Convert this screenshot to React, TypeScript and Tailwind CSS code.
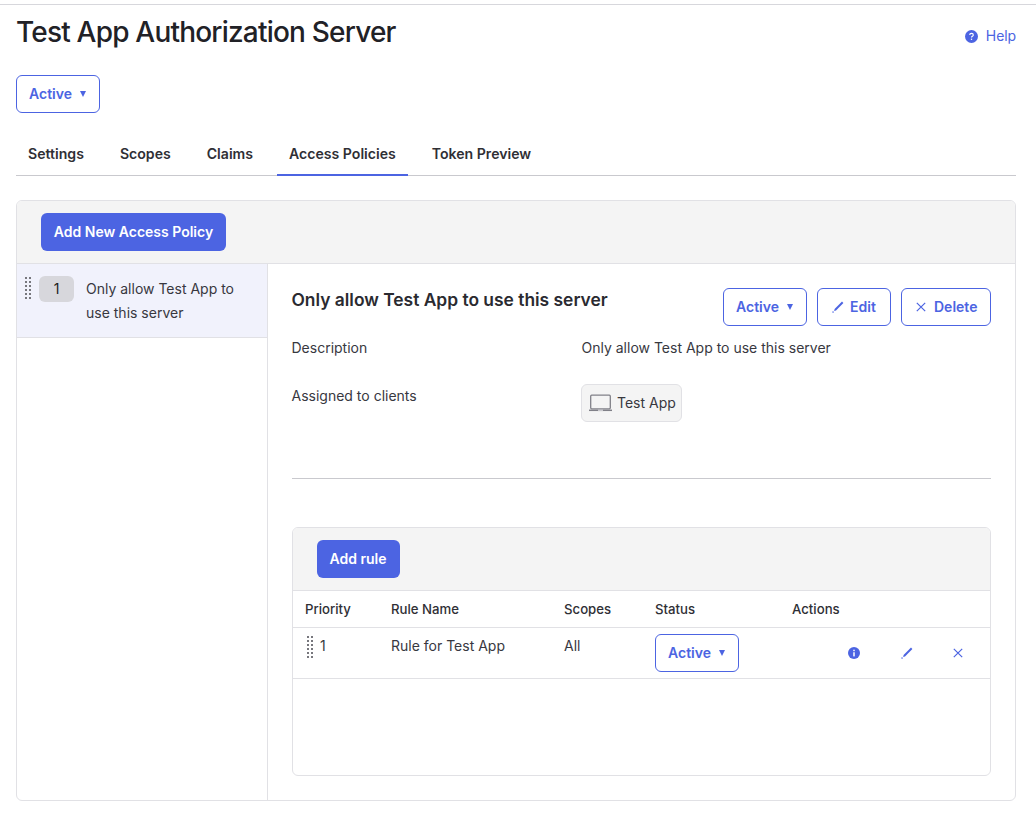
import type React from "react"

const blue = "text-[#4c64e2]"

function Caret() {
  return <span className="ml-2 inline-block h-0 w-0 border-x-[3.5px] border-t-[6px] border-x-transparent border-t-[#4c64e2]" />
}

function OutlineButton({ children, className = "" }: { children: React.ReactNode; className?: string }) {
  return (
    <button className={`flex h-[38px] items-center rounded-md border border-[#4c64e2] bg-white text-sm font-semibold ${blue} ${className}`}>
      {children}
    </button>
  )
}

function StatusButton({ className = "" }: { className?: string }) {
  return (
    <OutlineButton className={`w-[84px] pl-3 ${className}`}>
      Active
      <Caret />
    </OutlineButton>
  )
}

function Grip() {
  return (
    <div className="grid grid-cols-2 gap-[2px] self-start">
      {Array.from({ length: 12 }).map((_, i) => (
        <span key={i} className="h-[2px] w-[2px] bg-[#77777d]" />
      ))}
    </div>
  )
}

function InfoIcon({ size }: { size: number }) {
  return (
    <svg width={size} height={size} viewBox="0 0 16 16">
      <circle cx="8" cy="8" r="8" fill="#4c64e2" />
      <rect x="7" y="7" width="2" height="5.5" fill="#fff" />
      <rect x="7" y="3.6" width="2" height="2" fill="#fff" />
    </svg>
  )
}

function HelpIcon() {
  return (
    <svg width="13" height="13" viewBox="0 0 16 16">
      <circle cx="8" cy="8" r="8" fill="#4c64e2" />
      <path d="M5.8 6.2c0-1.3 1-2 2.2-2s2.2.7 2.2 1.9c0 1.7-2.2 1.6-2.2 3.2" fill="none" stroke="#fff" strokeWidth="1.4" />
      <rect x="7.2" y="10.6" width="1.6" height="1.6" fill="#fff" />
    </svg>
  )
}

function PencilIcon() {
  return (
    <svg width="12" height="12" viewBox="0 0 12 12" fill="#4c64e2">
      <path d="M10 .6l1.4 1.4-7.4 7.4-1.9.5.5-1.9z" />
      <rect x="0.4" y="10.4" width="1.3" height="1.3" />
    </svg>
  )
}

function CloseIcon() {
  return (
    <svg width="10" height="10" viewBox="0 0 10 10" fill="none" stroke="#4c64e2" strokeWidth="1.2">
      <path d="M.8.8l8.4 8.4M9.2.8L.8 9.2" />
    </svg>
  )
}

function LaptopIcon() {
  return (
    <svg width="23" height="18" viewBox="0 0 23 18" fill="none" stroke="#808088">
      <rect x="1.7" y="1.2" width="19.6" height="13.6" rx="1" strokeWidth="1.3" />
      <path d="M0 16.3h23" strokeWidth="1.5" />
      <path d="M9 16.3h5" stroke="#c9c9ce" strokeWidth="1.5" />
    </svg>
  )
}

const tabs = ["Settings", "Scopes", "Claims", "Access Policies", "Token Preview"]

export default function App() {
  return (
    <div className="h-[817px] w-[1036px] overflow-hidden bg-white pt-1 font-['Inter',sans-serif] text-sm text-[#1d1d21]">
      <div className="h-px bg-[#d7d7dc]" />
      <div className="pr-5 pl-4">
        <div className="flex items-start justify-between">
          <h1 className="mt-[9px] text-[28px] leading-9 font-medium tracking-[-0.8px] text-[#212126]">Test App Authorization Server</h1>
          <a className={`mt-[21px] flex items-center gap-[8px] text-sm tracking-[-0.1px] ${blue}`}>
            <HelpIcon />
            Help
          </a>
        </div>

        <StatusButton className="mt-[25px]" />

        <div className="mt-5 flex border-b border-[#c9c9ce]">
          {tabs.map((t) => (
            <div
              key={t}
              className={`mr-3 -mb-px h-[43px] border-b-2 px-3 pt-[11px] text-[14.1px] font-semibold ${
                t === "Access Policies" ? "border-[#4c64e2]" : "border-transparent"
              } text-[#2f2f35]`}
            >
              {t}
            </div>
          ))}
        </div>

        <div className="mt-6 h-[601px] overflow-hidden rounded-md border border-[#e1e1e5]">
          <div className="h-[63px] border-b border-[#e1e1e5] bg-[#f4f4f4] pt-3 pl-6">
            <button className="h-[38px] w-[185px] rounded-md bg-[#4c64e2] text-sm font-semibold text-white">Add New Access Policy</button>
          </div>
          <div className="flex h-[536px]">
            <div className="w-[251px] shrink-0 border-r border-[#e1e1e5]">
              <div className="flex h-[74px] border-b border-[#e1e1e5] bg-[#f1f2fc] pt-3 pl-2">
                <div className="mt-px">
                  <Grip />
                </div>
                <div className="ml-2 flex h-[26px] w-[35px] items-center justify-center rounded-md bg-[#d7d7dc] text-sm">1</div>
                <div className="mt-px ml-3 w-[160px] text-sm leading-6 text-[#38383f]">Only allow Test App to use this server</div>
              </div>
            </div>

            <div className="flex-1 px-6">
              <div className="flex items-start justify-between pt-6">
                <h2 className="-ml-[0.5px] text-[17.4px] leading-6 font-semibold text-[#2a2a30]">Only allow Test App to use this server</h2>
                <div className="flex gap-[10px]">
                  <StatusButton />
                  <OutlineButton className="w-[74px] pl-[14px]">
                    <PencilIcon />
                    <span className="ml-[6px]">Edit</span>
                  </OutlineButton>
                  <OutlineButton className="w-[90px] pl-[14px]">
                    <CloseIcon />
                    <span className="ml-2">Delete</span>
                  </OutlineButton>
                </div>
              </div>

              <div className="mt-[10px] -ml-[0.5px] flex text-sm leading-6 text-[#38383f]">
                <div className="w-[290px]">Description</div>
                <div>Only allow Test App to use this server</div>
              </div>
              <div className="mt-6 -ml-[0.5px] flex text-sm leading-6 text-[#38383f]">
                <div className="w-[289.5px]">Assigned to clients</div>
                <div className="flex h-[38px] w-[101px] items-center gap-[5px] rounded-md border border-[#e1e1e5] bg-[#f4f4f4] pl-[7px]">
                  <LaptopIcon />
                  Test App
                </div>
              </div>

              <div className="mt-[56px] h-px bg-[#c9c9ce]" />

              <div className="mt-12 h-[249px] overflow-hidden rounded-md border border-[#e1e1e5]">
                <div className="h-[63px] border-b border-[#e1e1e5] bg-[#f4f4f4] pt-3 pl-6">
                  <button className="h-[38px] w-[83px] rounded-md bg-[#4c64e2] pr-px text-sm font-semibold text-white">Add rule</button>
                </div>
                <div className="flex h-[37px] items-center border-b border-[#e1e1e5] pt-px text-[13.2px] font-medium text-[#2f2f35]">
                  <div className="w-[98px] pl-3">Priority</div>
                  <div className="w-[173px]">Rule Name</div>
                  <div className="w-[91px]">Scopes</div>
                  <div className="w-[137px]">Status</div>
                  <div>Actions</div>
                </div>
                <div className="flex h-[51px] border-b border-[#e1e1e5] text-sm text-[#38383f]">
                  <div className="flex w-[98px] pt-[8px] pl-[14px]">
                    <Grip />
                    <span className="-mt-[2px] ml-[7px] leading-6">1</span>
                  </div>
                  <div className="w-[173px] pt-[6px] leading-6">Rule for Test App</div>
                  <div className="w-[91px] pt-[6px] leading-6">All</div>
                  <div className="w-[137px] pt-[6px]">
                    <StatusButton />
                  </div>
                  <div className="flex flex-1 items-start pt-[19px] pl-[56px]">
                    <InfoIcon size={12} />
                    <span className="ml-[41px]">
                      <PencilIcon />
                    </span>
                    <span className="mt-px ml-10">
                      <CloseIcon />
                    </span>
                  </div>
                </div>
              </div>
            </div>
          </div>
        </div>
      </div>
    </div>
  )
}
